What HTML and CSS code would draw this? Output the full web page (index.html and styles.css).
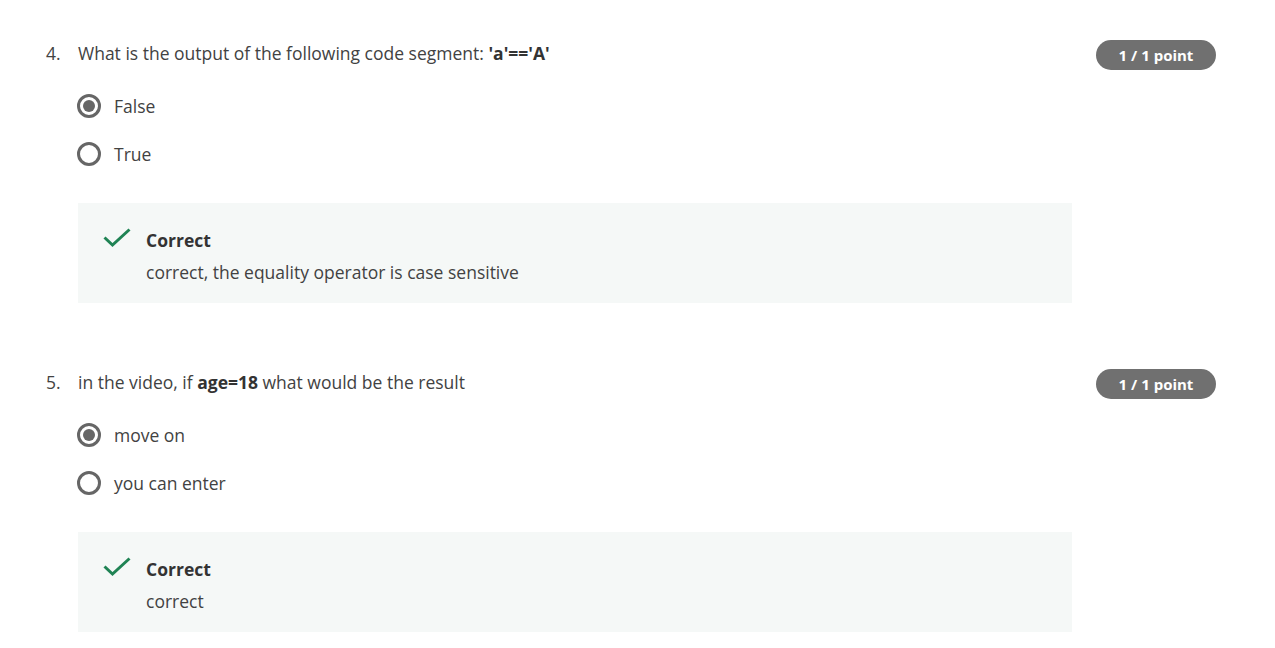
FILE: index.html
```html
<!DOCTYPE html>
<html>
<head>
<meta charset="utf-8">
<link rel="stylesheet" href="styles.css">
</head>
<body>
<main class="quiz">
  <section class="question">
    <div class="num">4.</div>
    <div class="body">
      <div class="title">What is the output of the following code segment: <strong>'a'=='A'</strong></div>
      <div class="options">
        <div class="option"><span class="radio checked"></span><span>False</span></div>
        <div class="option"><span class="radio"></span><span>True</span></div>
      </div>
      <div class="feedback">
        <svg class="check" width="28" height="20" viewBox="0 0 28 20"><polyline points="1.5,9.5 9.5,17 26.5,1.5" fill="none" stroke="#1f8354" stroke-width="3"/></svg>
        <div class="fb-text">
          <div class="fb-title">Correct</div>
          <div class="fb-desc">correct, the equality operator is case sensitive</div>
        </div>
      </div>
    </div>
    <div class="badge">1 / 1 point</div>
  </section>
  <section class="question">
    <div class="num">5.</div>
    <div class="body">
      <div class="title">in the video, if <strong>age=18</strong> what would be the result</div>
      <div class="options">
        <div class="option"><span class="radio checked"></span><span>move on</span></div>
        <div class="option"><span class="radio"></span><span>you can enter</span></div>
      </div>
      <div class="feedback">
        <svg class="check" width="28" height="20" viewBox="0 0 28 20"><polyline points="1.5,9.5 9.5,17 26.5,1.5" fill="none" stroke="#1f8354" stroke-width="3"/></svg>
        <div class="fb-text">
          <div class="fb-title">Correct</div>
          <div class="fb-desc">correct</div>
        </div>
      </div>
    </div>
    <div class="badge">1 / 1 point</div>
  </section>
</main>
</body>
</html>
```
FILE: styles.css
```css
* { box-sizing: border-box; }
html, body { margin: 0; padding: 0; background: #fff; }
body {
  font-family: "Open Sans", "Liberation Sans", sans-serif;
  font-size: 17.5px;
  color: #424242;
}
.quiz {
  padding: 40px 59px 0 46px;
  display: flex;
  flex-direction: column;
  gap: 66px;
}
.question {
  display: flex;
  align-items: flex-start;
}
.num {
  width: 32px;
  line-height: 26px;
}
.body {
  width: 994px;
  margin-right: 24px;
}
.title {
  line-height: 26px;
}
.title strong { color: #333; font-weight: 700; }
.options {
  margin-top: 16px;
  display: flex;
  flex-direction: column;
}
.option {
  height: 48px;
  display: flex;
  align-items: center;
  gap: 13px;
  margin-left: -1px;
}
.option:last-child { height: 47px; }
.radio {
  width: 24px;
  height: 24px;
  border: 3px solid #666;
  border-radius: 50%;
  display: flex;
  align-items: center;
  justify-content: center;
  flex: none;
}
.radio.checked::after {
  content: "";
  width: 12px;
  height: 12px;
  border-radius: 50%;
  background: #666;
}
.feedback {
  margin-top: 26px;
  background: #f5f8f7;
  height: 100px;
  padding: 25px 0 0 25px;
  display: flex;
  align-items: flex-start;
}
.check {
  margin-top: 0;
  flex: none;
}
.fb-text {
  margin-left: 15px;
}
.fb-title {
  font-weight: 700;
  line-height: 24px;
  color: #333;
}
.fb-desc {
  margin-top: 8px;
  line-height: 24px;
}
.badge {
  width: 120px;
  height: 30px;
  border-radius: 15px;
  background: #707070;
  color: #fff;
  font-size: 15px;
  font-weight: 700;
  display: flex;
  align-items: center;
  justify-content: center;
  flex: none;
}
```
